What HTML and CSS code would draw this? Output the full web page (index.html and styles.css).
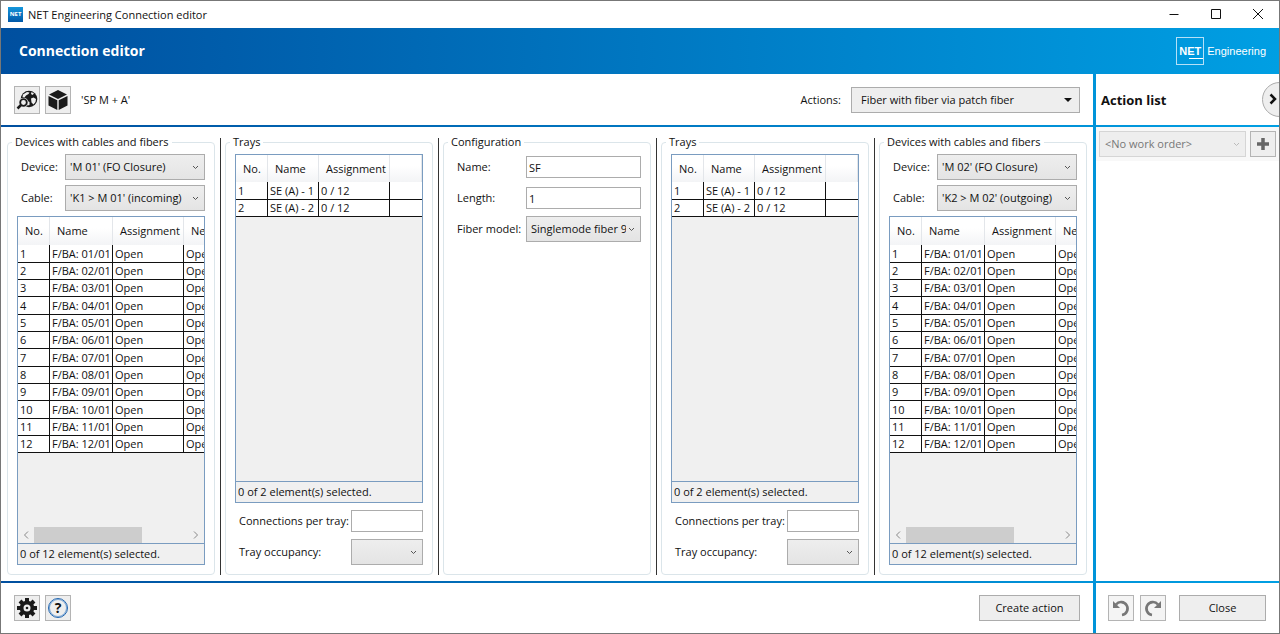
FILE: index.html
```html
<!DOCTYPE html>
<html lang="en">
<head>
  <meta charset="UTF-8" />
  <meta name="viewport" content="width=device-width, initial-scale=1.0"/>
  <title>NET Engineering Connection editor</title>
  <link rel="stylesheet" href="styles.css">
</head>
<body>
  <div class="titlebar">
    <span class="app-icon">NET</span>
    <span class="window-title">NET Engineering Connection editor</span>
    <button class="win-btn" aria-label="Minimize"><svg width="10" height="10" viewBox="0 0 10 10"><path d="M0.500 5.500H9.500"/></svg></button>
    <button class="win-btn" aria-label="Maximize"><svg width="10" height="10" viewBox="0 0 10 10"><path d="M.5 .5h9v9h-9z"/></svg></button>
    <button class="win-btn" aria-label="Close window"><svg width="10" height="10" viewBox="0 0 10 10"><path d="M0 0L10 10M10 0L0 10"/></svg></button>
  </div>

  <div class="shell">
    <header class="banner">
      <h1>Connection editor</h1>
      <div class="brand"><span class="brand-box">NET</span><span>Engineering</span></div>
    </header>

    <div class="panes">
      <div class="toolbar">
        <button class="icon-btn" aria-label="Locate on map">
          <svg width="22" height="22" viewBox="0 0 22 22">
            <circle cx="13" cy="10" r="8.300" fill="#1a1a1a"/>
            <path d="M7 5.500L11 3L13.500 3.500L12.500 5L10 6.500L8.500 8.500L6.500 8ZM15.500 3L18 4.500L16.500 6L15 5ZM15 9.500L17.500 8.500L20 10L19.500 13L17.500 15.500L15.500 13.500ZM11.500 12L13.500 13L13.500 16L11.500 16.500Z" fill="#eee"/>
            <path d="M5.500 15.500L1.500 20" stroke="#eee" stroke-width="4"/>
            <circle cx="7.500" cy="13.500" r="4.800" fill="#eee"/>
            <circle cx="7.500" cy="13.500" r="3.300" fill="#eee" stroke="#1a1a1a" stroke-width="1.800"/>
            <path d="M5 16L1.500 19.500" stroke="#1a1a1a" stroke-width="2.500"/>
          </svg>
        </button>
        <button class="icon-btn" aria-label="Show object">
          <svg width="22" height="22" viewBox="0 0 22 22" fill="#1a1a1a">
            <path d="M11 1L20 5.500L11 10L2 5.500ZM1.500 7L10.300 11.300V21L1.500 16.500ZM20.500 7L11.700 11.300V21L20.500 16.500Z"/>
          </svg>
        </button>
        <span class="object-name">'SP M + A'</span>
        <label for="actions">Actions:</label>
        <select id="actions" class="action-select"><option>Fiber with fiber via patch fiber</option></select>
      </div>

      <div class="list-head">
        <h2>Action list</h2>
        <button class="collapse" aria-label="Collapse action list"><svg width="9" height="12" viewBox="0 0 9 12"><path d="M1.500 1.500L6 6L1.500 10.500" fill="none" stroke="#111" stroke-width="2.500"/></svg></button>
      </div>

      <main class="editor">
        <fieldset class="group">
          <legend>Devices with cables and fibers</legend>
          <div class="row device-row">
            <label for="device1">Device:</label>
            <select id="device1"><option>'M 01' (FO Closure)</option></select>
          </div>
          <div class="row device-row">
            <label for="cable1">Cable:</label>
            <select id="cable1"><option>'K1 &gt; M 01' (incoming)</option></select>
          </div>
          <div class="list">
            <div class="list-body">
              <table class="fibers">
                <colgroup><col class="c-no"><col class="c-fiber"><col class="c-assign"><col class="c-next"></colgroup>
                <thead><tr><th>No.</th><th>Name</th><th>Assignment</th><th>Next</th></tr></thead>
                <tbody>
                  <tr><td>1</td><td>F/BA: 01/01</td><td>Open</td><td>Open</td></tr>
                  <tr><td>2</td><td>F/BA: 02/01</td><td>Open</td><td>Open</td></tr>
                  <tr><td>3</td><td>F/BA: 03/01</td><td>Open</td><td>Open</td></tr>
                  <tr><td>4</td><td>F/BA: 04/01</td><td>Open</td><td>Open</td></tr>
                  <tr><td>5</td><td>F/BA: 05/01</td><td>Open</td><td>Open</td></tr>
                  <tr><td>6</td><td>F/BA: 06/01</td><td>Open</td><td>Open</td></tr>
                  <tr><td>7</td><td>F/BA: 07/01</td><td>Open</td><td>Open</td></tr>
                  <tr><td>8</td><td>F/BA: 08/01</td><td>Open</td><td>Open</td></tr>
                  <tr><td>9</td><td>F/BA: 09/01</td><td>Open</td><td>Open</td></tr>
                  <tr><td>10</td><td>F/BA: 10/01</td><td>Open</td><td>Open</td></tr>
                  <tr><td>11</td><td>F/BA: 11/01</td><td>Open</td><td>Open</td></tr>
                  <tr><td>12</td><td>F/BA: 12/01</td><td>Open</td><td>Open</td></tr>
                </tbody>
              </table>
            </div>
            <div class="scrollbar">
              <svg width="16" height="16" viewBox="0 0 16 16"><path d="M10 4.500L6.500 8L10 11.500"/></svg>
              <div class="track"><div class="thumb"></div></div>
              <svg width="16" height="16" viewBox="0 0 16 16"><path d="M6 4.500L9.500 8L6 11.500"/></svg>
            </div>
            <div class="status">0 of 12 element(s) selected.</div>
          </div>
        </fieldset>

        <div class="divider"></div>

        <fieldset class="group">
          <legend>Trays</legend>
          <div class="list">
            <div class="list-body">
              <table>
                <colgroup><col class="c-no"><col class="c-tray"><col class="c-assign"><col></colgroup>
                <thead><tr><th>No.</th><th>Name</th><th>Assignment</th><th></th></tr></thead>
                <tbody>
                  <tr><td>1</td><td>SE (A) - 1</td><td>0 / 12</td><td></td></tr>
                  <tr><td>2</td><td>SE (A) - 2</td><td>0 / 12</td><td></td></tr>
                </tbody>
              </table>
            </div>
            <div class="status">0 of 2 element(s) selected.</div>
          </div>
          <div class="row tray-row">
            <label for="per-tray1">Connections per tray:</label>
            <input type="text" id="per-tray1">
          </div>
          <div class="row tray-row">
            <label for="occupancy1">Tray occupancy:</label>
            <select id="occupancy1"><option></option></select>
          </div>
        </fieldset>

        <div class="divider"></div>

        <fieldset class="group">
          <legend>Configuration</legend>
          <div class="row config-row">
            <label for="name">Name:</label>
            <input type="text" id="name" value="SF">
          </div>
          <div class="row config-row">
            <label for="length">Length:</label>
            <input type="text" id="length" value="1">
          </div>
          <div class="row config-row">
            <label for="model">Fiber model:</label>
            <select id="model"><option>Singlemode fiber 9/125</option></select>
          </div>
        </fieldset>

        <div class="divider"></div>

        <fieldset class="group">
          <legend>Trays</legend>
          <div class="list">
            <div class="list-body">
              <table>
                <colgroup><col class="c-no"><col class="c-tray"><col class="c-assign"><col></colgroup>
                <thead><tr><th>No.</th><th>Name</th><th>Assignment</th><th></th></tr></thead>
                <tbody>
                  <tr><td>1</td><td>SE (A) - 1</td><td>0 / 12</td><td></td></tr>
                  <tr><td>2</td><td>SE (A) - 2</td><td>0 / 12</td><td></td></tr>
                </tbody>
              </table>
            </div>
            <div class="status">0 of 2 element(s) selected.</div>
          </div>
          <div class="row tray-row">
            <label for="per-tray2">Connections per tray:</label>
            <input type="text" id="per-tray2">
          </div>
          <div class="row tray-row">
            <label for="occupancy2">Tray occupancy:</label>
            <select id="occupancy2"><option></option></select>
          </div>
        </fieldset>

        <div class="divider"></div>

        <fieldset class="group">
          <legend>Devices with cables and fibers</legend>
          <div class="row device-row">
            <label for="device2">Device:</label>
            <select id="device2"><option>'M 02' (FO Closure)</option></select>
          </div>
          <div class="row device-row">
            <label for="cable2">Cable:</label>
            <select id="cable2"><option>'K2 &gt; M 02' (outgoing)</option></select>
          </div>
          <div class="list">
            <div class="list-body">
              <table class="fibers">
                <colgroup><col class="c-no"><col class="c-fiber"><col class="c-assign"><col class="c-next"></colgroup>
                <thead><tr><th>No.</th><th>Name</th><th>Assignment</th><th>Next</th></tr></thead>
                <tbody>
                  <tr><td>1</td><td>F/BA: 01/01</td><td>Open</td><td>Open</td></tr>
                  <tr><td>2</td><td>F/BA: 02/01</td><td>Open</td><td>Open</td></tr>
                  <tr><td>3</td><td>F/BA: 03/01</td><td>Open</td><td>Open</td></tr>
                  <tr><td>4</td><td>F/BA: 04/01</td><td>Open</td><td>Open</td></tr>
                  <tr><td>5</td><td>F/BA: 05/01</td><td>Open</td><td>Open</td></tr>
                  <tr><td>6</td><td>F/BA: 06/01</td><td>Open</td><td>Open</td></tr>
                  <tr><td>7</td><td>F/BA: 07/01</td><td>Open</td><td>Open</td></tr>
                  <tr><td>8</td><td>F/BA: 08/01</td><td>Open</td><td>Open</td></tr>
                  <tr><td>9</td><td>F/BA: 09/01</td><td>Open</td><td>Open</td></tr>
                  <tr><td>10</td><td>F/BA: 10/01</td><td>Open</td><td>Open</td></tr>
                  <tr><td>11</td><td>F/BA: 11/01</td><td>Open</td><td>Open</td></tr>
                  <tr><td>12</td><td>F/BA: 12/01</td><td>Open</td><td>Open</td></tr>
                </tbody>
              </table>
            </div>
            <div class="scrollbar">
              <svg width="16" height="16" viewBox="0 0 16 16"><path d="M10 4.500L6.500 8L10 11.500"/></svg>
              <div class="track"><div class="thumb"></div></div>
              <svg width="16" height="16" viewBox="0 0 16 16"><path d="M6 4.500L9.500 8L6 11.500"/></svg>
            </div>
            <div class="status">0 of 12 element(s) selected.</div>
          </div>
        </fieldset>
      </main>

      <aside class="action-list">
        <div class="order-row">
          <select class="order-select" aria-label="Work order" disabled><option>&lt;No work order&gt;</option></select>
          <button class="icon-btn" aria-label="Add work order"><svg width="14" height="14" viewBox="0 0 14 14"><path d="M7 1V13M1 7H13" stroke="#666" stroke-width="3.500"/></svg></button>
        </div>
      </aside>

      <div class="footer">
        <button class="icon-btn" aria-label="Settings">
          <svg width="22" height="22" viewBox="0 0 22 22">
            <g stroke="#1a1a1a" stroke-width="4"><path d="M11 1V21M1 11H21M4 4L18 18M18 4L4 18"/></g>
            <circle cx="11" cy="11" r="7.300" fill="#1a1a1a"/>
            <circle cx="11" cy="11" r="3.500" fill="#eee"/>
            <circle cx="11" cy="11" r="1.300" fill="#1a1a1a"/>
          </svg>
        </button>
        <button class="icon-btn" aria-label="Help"><span class="help">?</span></button>
        <button class="btn create">Create action</button>
      </div>

      <div class="list-foot">
        <button class="icon-btn" aria-label="Undo">
          <svg width="20" height="20" viewBox="0 0 20 20"><path d="M5 6.500A6.500 6.500 0 1 1 11 17" fill="none" stroke="#777" stroke-width="2.600"/><path d="M2 3V10H9Z" fill="#777"/></svg>
        </button>
        <button class="icon-btn" aria-label="Redo">
          <svg width="20" height="20" viewBox="0 0 20 20"><path d="M15 6.500A6.500 6.500 0 1 0 9 17" fill="none" stroke="#777" stroke-width="2.600"/><path d="M18 3V10H11Z" fill="#777"/></svg>
        </button>
        <button class="btn close">Close</button>
      </div>
    </div>
  </div>
</body>
</html>
```
FILE: styles.css
```css
* {
  box-sizing: border-box;
}
body {
  margin: 0;
  min-height: 100vh;
  display: flex;
  flex-direction: column;
  border: 1px solid #777;
  background: white;
  color: #111;
  font-family: "Open Sans", "Noto Sans", sans-serif;
  font-size: 11px;
  line-height: 16px;
}
h1, h2 {
  margin: 0;
  font-size: 13px;
  font-weight: bold;
}
h1 {
  font-size: 14px;
}
button, input, select {
  font: inherit;
  color: inherit;
  margin: 0;
  border-radius: 0;
}

/* window frame */
.titlebar {
  display: flex;
  align-items: center;
  height: 27px;
  padding-left: 7px;
}
.app-icon {
  width: 15px;
  height: 15px;
  background: linear-gradient(#1597dc, #0058a8);
  color: white;
  font-size: 6px;
  font-weight: bold;
  line-height: 15px;
  text-align: center;
}
.window-title {
  flex: 1;
  padding-left: 5px;
}
.win-btn {
  width: 42px;
  height: 26px;
  padding: 0;
  border: 0;
  background: none;
}
.win-btn path {
  fill: none;
  stroke: #111;
}

/* the gradient shows through the pane gaps as separator lines */
.shell {
  flex: 1;
  display: flex;
  flex-direction: column;
  background: linear-gradient(to right, #004f9f, #009fe3);
}
.banner {
  display: flex;
  align-items: center;
  justify-content: space-between;
  height: 46px;
  padding: 0 13px 0 18px;
  color: white;
}
.brand {
  display: flex;
  align-items: center;
  gap: 3px;
  font-family: "Liberation Sans", Arial, sans-serif;
}
.brand-box {
  width: 28px;
  height: 28px;
  border: 1px solid #b5e0f7;
  font-weight: bold;
  line-height: 26px;
  text-align: center;
  background: linear-gradient(white, white) right 20px / 14px 1px no-repeat;
}
.panes {
  flex: 1;
  display: grid;
  grid-template-columns: minmax(0, 1fr) 183px;
  grid-template-rows: 51px 1fr 50px;
  gap: 2px 3px;
}
.panes > * {
  background: white;
}
.toolbar, .footer, .list-foot {
  display: flex;
  align-items: center;
  gap: 5px;
  padding: 0 13px;
}
.object-name {
  flex: 1;
  padding-left: 5px;
}
.toolbar label {
  margin-right: 5px;
}

/* controls */
select, input {
  min-width: 0;
  height: 26px;
  padding: 0 14px 0 4px;
  border: 1px solid #acacac;
}
input {
  height: 22px;
  padding: 0 2px;
  background: white;
}
select {
  appearance: none;
  background: url("data:image/svg+xml,%3Csvg xmlns='http://www.w3.org/2000/svg' width='7' height='5'%3E%3Cpath d='M1 1l2.500 2.500L6 1' fill='none' stroke='%23555'/%3E%3C/svg%3E") right 5px center no-repeat, linear-gradient(#eee, #e4e4e4);
}
.action-select {
  width: 229px;
  padding-left: 9px;
  background: url("data:image/svg+xml,%3Csvg xmlns='http://www.w3.org/2000/svg' width='8' height='4'%3E%3Cpath d='M0 0h8L4 4z' fill='%23111'/%3E%3C/svg%3E") right 7px center no-repeat, #eee;
}
.icon-btn {
  display: flex;
  flex: none;
  align-items: center;
  justify-content: center;
  width: 26px;
  height: 26px;
  padding: 0;
  border: 1px solid #b4b4b4;
  background: #eee;
}
.toolbar .icon-btn {
  height: 28px;
}
.btn {
  height: 26px;
  border: 1px solid #acacac;
  background: #eee;
}
.create {
  width: 101px;
  margin-left: auto;
}
.help {
  width: 20px;
  height: 20px;
  border: 1px solid #2166b0;
  border-radius: 50%;
  box-shadow: inset 0 0 0 1px #7fa9d6;
  font-size: 14px;
  font-weight: bold;
  line-height: 18px;
}

/* five group boxes */
.editor {
  display: grid;
  grid-template-columns: minmax(0, 1fr) 10px minmax(0, 1fr) 10px minmax(0, 1fr) 10px minmax(0, 1fr) 10px minmax(0, 1fr);
  padding: 7px 6px 6px;
}
.divider {
  width: 1px;
  margin: 4px auto 0;
  background: #333;
}
.group {
  display: flex;
  flex-direction: column;
  gap: 5px;
  min-width: 0;
  margin: 0;
  padding: 4px 9px 9px;
  border: 1px solid #dbe5ea;
  border-radius: 4px;
}
legend {
  margin-left: -5px;
  padding: 0 3px;
}
.row {
  display: flex;
  align-items: center;
  height: 26px;
  padding-left: 4px;
}
.row label {
  flex: none;
}
.row input, .row select {
  flex: 1;
}
.device-row label {
  width: 44px;
}
.config-row label {
  width: 69px;
}
.tray-row label {
  width: 112px;
}

/* lists */
.list {
  flex: 1;
  display: flex;
  flex-direction: column;
  border: 1px solid #7a9cc0;
  background: #f0f0f0;
}
.list-body {
  flex: 1;
  overflow: hidden;
}
table {
  width: 100%;
  table-layout: fixed;
  border-collapse: separate;
  border-spacing: 0;
}
.fibers {
  width: 236px;
}
.c-no {
  width: 32px;
}
.c-fiber {
  width: 63px;
}
.c-tray {
  width: 51px;
}
.c-assign {
  width: 71px;
}
th, td {
  padding: 0 0 0 2px;
  text-align: left;
  white-space: nowrap;
}
th {
  height: 27px;
  padding-left: 7px;
  border-right: 1px solid #e3e6ea;
  background: linear-gradient(white 40%, #f3f4f6);
  font-weight: normal;
}
.fibers th {
  height: 28px;
}
td {
  height: 17px;
  border-right: 1px solid #111;
  border-bottom: 1px solid #111;
  background: white;
  line-height: 16px;
}
tbody tr:nth-child(3n + 1) td {
  height: 18px;
}
td:last-child {
  border-right: 0;
}
.scrollbar {
  display: flex;
  height: 16px;
}
.scrollbar path {
  fill: none;
  stroke: #888;
}
.track {
  flex: 1;
}
.thumb {
  width: 70%;
  height: 16px;
  background: #cdcdcd;
}
.status {
  height: 21px;
  padding-left: 2px;
  border-top: 1px solid #7a9cc0;
  line-height: 20px;
}

/* action list */
.list-head {
  display: flex;
  align-items: center;
  justify-content: space-between;
  overflow: hidden;
  padding-left: 5px;
}
.collapse {
  flex: none;
  width: 35px;
  height: 35px;
  margin-right: -18px;
  padding: 2px 0 0 6px;
  border: 1px solid #acacac;
  border-radius: 50%;
  background: #eee;
  text-align: left;
}
.order-row {
  display: flex;
  gap: 4px;
  padding: 4px 3px;
  background: #f8f8f8;
}
.order-select {
  flex: 1;
  padding-left: 5px;
  border-color: #d5d5d5;
  background: url("data:image/svg+xml,%3Csvg xmlns='http://www.w3.org/2000/svg' width='7' height='5'%3E%3Cpath d='M1 1l2.500 2.500L6 1' fill='none' stroke='%23bbb'/%3E%3C/svg%3E") right 5px center no-repeat, #eee;
  color: #777;
  opacity: 1;
}
.list-foot {
  gap: 6px;
}
.list-foot {
  padding-left: 12px;
}
.list-foot .icon-btn {
  background: #f4f4f4;
}
.close {
  flex: 1;
  margin-left: 7px;
}
```
